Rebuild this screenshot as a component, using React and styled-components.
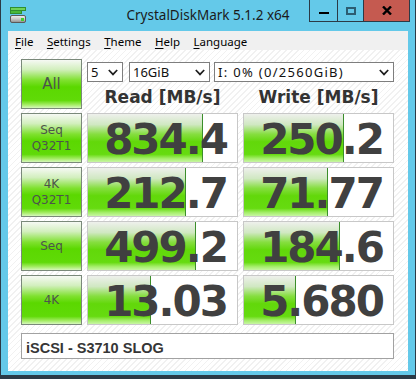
import React from 'react'
import styled, { createGlobalStyle } from 'styled-components'

const GlobalStyle = createGlobalStyle`
  html, body {
    margin: 0;
    padding: 0;
    background: #fff;
    overflow: hidden;
  }
`

const results = [
  { label: ['Seq', 'Q32T1'], read: '834.4', write: '250.2' },
  { label: ['4K', 'Q32T1'], read: '212.7', write: '71.77' },
  { label: ['Seq'], read: '499.2', write: '184.6' },
  { label: ['4K'], read: '13.03', write: '5.680' },
]

// log scale meter, like the real app
const meter = (v) => Math.max(0, Math.min(1, 0.204 + 0.194 * Math.log10(parseFloat(v))))

const menus = ['File', 'Settings', 'Theme', 'Help', 'Language']

function AppIcon() {
  return (
    <svg width="17" height="17" viewBox="0 0 17 17">
      <rect x="0.5" y="0.5" width="15" height="3" fill="#6fd35a" stroke="#2f8f2f" />
      <rect x="0.5" y="3.5" width="11" height="3" fill="#49b83a" stroke="#2f8f2f" />
      <defs>
        <linearGradient id="drv" x1="0" y1="0" x2="0" y2="1">
          <stop offset="0" stopColor="#f2f2f2" />
          <stop offset="0.5" stopColor="#c8c8c8" />
          <stop offset="1" stopColor="#8c8c8c" />
        </linearGradient>
      </defs>
      <rect x="0.5" y="8.5" width="15" height="7" rx="1.5" fill="url(#drv)" stroke="#5a5a5a" />
      <rect x="11" y="11" width="3" height="3" fill="#3fcf2f" />
    </svg>
  )
}

function Chevron() {
  return (
    <svg width="10" height="7" viewBox="0 0 10 7">
      <polyline points="0.8,1 5,5.4 9.2,1" fill="none" stroke="#1e1e1e" strokeWidth="1.7" />
    </svg>
  )
}

function App() {
  return (
    <>
      <GlobalStyle />
      <Window>
        <TitleBar>
          <IconWrap><AppIcon /></IconWrap>
          <Title>CrystalDiskMark 5.1.2 x64</Title>
          <Caption>
            <CapButton w={28}><MinGlyph /></CapButton>
            <CapButton w={26}><MaxGlyph /></CapButton>
            <CapButton w={46} close>
              <svg width="10" height="9" viewBox="0 0 10 9">
                <path d="M1 0.5 L9 8.5 M9 0.5 L1 8.5" stroke="#000" strokeWidth="2.4" />
              </svg>
            </CapButton>
          </Caption>
        </TitleBar>

        <Client>
          <MenuBar>
            {menus.map((m) => (
              <MenuItem key={m}><u>{m[0]}</u>{m.slice(1)}</MenuItem>
            ))}
          </MenuBar>

          <Content>
            <TestButton big>All</TestButton>
            <TopPanel>
              <Selects>
                <Select w={36}><span>5</span><Chevron /></Select>
                <Select w={81} ml={6}><span>16GiB</span><Chevron /></Select>
                <Select w={180} ml={4} spacing={1.3}><span>I: 0% (0/2560GiB)</span><Chevron /></Select>
              </Selects>
              <Headers>
                <Header>Read [MB/s]</Header>
                <Header>Write [MB/s]</Header>
              </Headers>
            </TopPanel>

            {results.map((r, i) => (
              <React.Fragment key={i}>
                <TestButton>
                  {r.label.map((l) => <div key={l}>{l}</div>)}
                </TestButton>
                <ValueBox>
                  <Fill style={{ width: `${meter(r.read) * 100}%` }} />
                  <Value>{r.read}</Value>
                </ValueBox>
                <ValueBox>
                  <Fill style={{ width: `${meter(r.write) * 100}%` }} />
                  <Value>{r.write}</Value>
                </ValueBox>
              </React.Fragment>
            ))}

            <Comment>iSCSI - S3710 SLOG</Comment>
          </Content>
        </Client>
      </Window>
    </>
  )
}

export default App

const Window = styled.div`
  width: 416px;
  height: 379px;
  box-sizing: border-box;
  background: #64c9e9;
  border: 1px solid #2b3a46;
  border-top: none;
  border-bottom-width: 4px;
  display: flex;
  flex-direction: column;
`

const TitleBar = styled.div`
  height: 31px;
  flex-shrink: 0;
  display: grid;
  grid-template-columns: 1fr auto 1fr;
  align-items: start;
`

const IconWrap = styled.div`
  margin: 7px 0 0 9px;
  height: 17px;
`

const Title = styled.div`
  font-family: "Noto Sans", "Open Sans", sans-serif;
  font-size: 13.5px;
  line-height: 20px;
  padding-top: 5px;
  color: #1b1b1b;
  white-space: nowrap;
`

const Caption = styled.div`
  justify-self: end;
  margin-right: 5px;
  display: flex;
  border-left: 1px solid #2b3a46;
`

const CapButton = styled.div`
  width: ${(p) => p.w}px;
  height: 22px;
  box-sizing: border-box;
  border-right: 1px solid #2b3a46;
  border-bottom: 1px solid #2b3a46;
  background: ${(p) => (p.close ? '#c55a50' : 'transparent')};
  display: flex;
  align-items: center;
  justify-content: center;
`

const MinGlyph = styled.div`
  width: 10px;
  height: 2px;
  margin-top: 4px;
  background: #000;
`

const MaxGlyph = styled.div`
  width: 10px;
  height: 8px;
  box-sizing: border-box;
  border: 2px solid #2c5d72;
`

const Client = styled.div`
  flex: 1;
  margin: 0 7px 4px 7px;
  display: flex;
  flex-direction: column;
  min-height: 0;
`

const MenuBar = styled.div`
  height: 19px;
  flex-shrink: 0;
  background: #f0f0f0;
  display: flex;
  padding-left: 7px;
  box-sizing: border-box;
`

const MenuItem = styled.div`
  font-family: "Noto Sans", "Open Sans", sans-serif;
  font-size: 11.5px;
  line-height: 17px;
  padding-top: 2px;
  margin-right: 13.5px;
  color: #000;
  u {
    text-decoration-thickness: 1px;
    text-underline-offset: 2px;
  }
`

const Content = styled.div`
  flex: 1;
  box-sizing: border-box;
  padding: 9px 14px 8px 13px;
  background: repeating-linear-gradient(135deg, #ffffff 0 3px, #f1f1f1 3px 4.2px);
  display: grid;
  grid-template-columns: 61px 151px 151px;
  grid-template-rows: repeat(5, 50px) 30px;
  column-gap: 5px;
  row-gap: 4px;
`

const TestButton = styled.div`
  box-sizing: border-box;
  border: 1px solid #7a897a;
  background: linear-gradient(
    to bottom,
    #f6f9f4 0%,
    #d2efbd 20%,
    #7fe12f 42%,
    #5bd800 56%,
    #60da08 84%,
    #a3ec62 93%,
    #d6f8bd 100%
  );
  display: flex;
  flex-direction: column;
  align-items: center;
  justify-content: center;
  font-family: "DejaVu Sans", Verdana, sans-serif;
  font-size: ${(p) => (p.big ? '15px' : '12px')};
  line-height: 16px;
  color: #4c544c;
`

const TopPanel = styled.div`
  grid-column: 2 / 4;
  display: flex;
  flex-direction: column;
`

const Selects = styled.div`
  margin-top: 3px;
  height: 22px;
  display: flex;
`

const Select = styled.div`
  width: ${(p) => p.w}px;
  margin-left: ${(p) => p.ml || 0}px;
  box-sizing: border-box;
  border: 1px solid #7e7e7e;
  background: #fff;
  display: flex;
  align-items: center;
  justify-content: space-between;
  padding: 0 4px 0 3px;
  font-family: "Noto Sans", "Open Sans", sans-serif;
  font-size: 13px;
  letter-spacing: ${(p) => p.spacing || 0}px;
  color: #111;
  white-space: nowrap;
`

const Headers = styled.div`
  display: grid;
  grid-template-columns: 151px 151px;
  column-gap: 5px;
`

const Header = styled.div`
  text-align: center;
  font-family: "DejaVu Sans", Verdana, sans-serif;
  font-weight: bold;
  font-size: 17px;
  line-height: 25px;
  padding-top: 3px;
  color: #333;
  white-space: nowrap;
`

const ValueBox = styled.div`
  position: relative;
  box-sizing: border-box;
  border: 1px solid #c8c8c8;
  background: #fff;
  overflow: hidden;
  display: flex;
  align-items: center;
  justify-content: flex-end;
  padding: 3px 10px 0 0;
`

const Fill = styled.div`
  position: absolute;
  left: 0;
  top: 0;
  bottom: 0;
  box-sizing: border-box;
  border-right: 1px solid #3b8e2b;
  background: linear-gradient(
    to bottom,
    #eef0ec 0%,
    #d0e8c2 22%,
    #86de40 42%,
    #62d80a 58%,
    #66db10 84%,
    #a6ee6c 93%,
    #c8f6a4 100%
  );
`

const Value = styled.span`
  position: relative;
  font-family: "DejaVu Sans", Verdana, sans-serif;
  font-weight: bold;
  font-size: 42px;
  letter-spacing: -2px;
  line-height: 1;
  color: #404040;
`

const Comment = styled.div`
  grid-column: 1 / -1;
  margin-top: 4px;
  box-sizing: border-box;
  border: 1px solid #a2a2a2;
  background: #fff;
  padding-left: 4px;
  font-family: "Liberation Sans", Arial, sans-serif;
  font-weight: bold;
  font-size: 14.5px;
  line-height: 28px;
  color: #363636;
`
